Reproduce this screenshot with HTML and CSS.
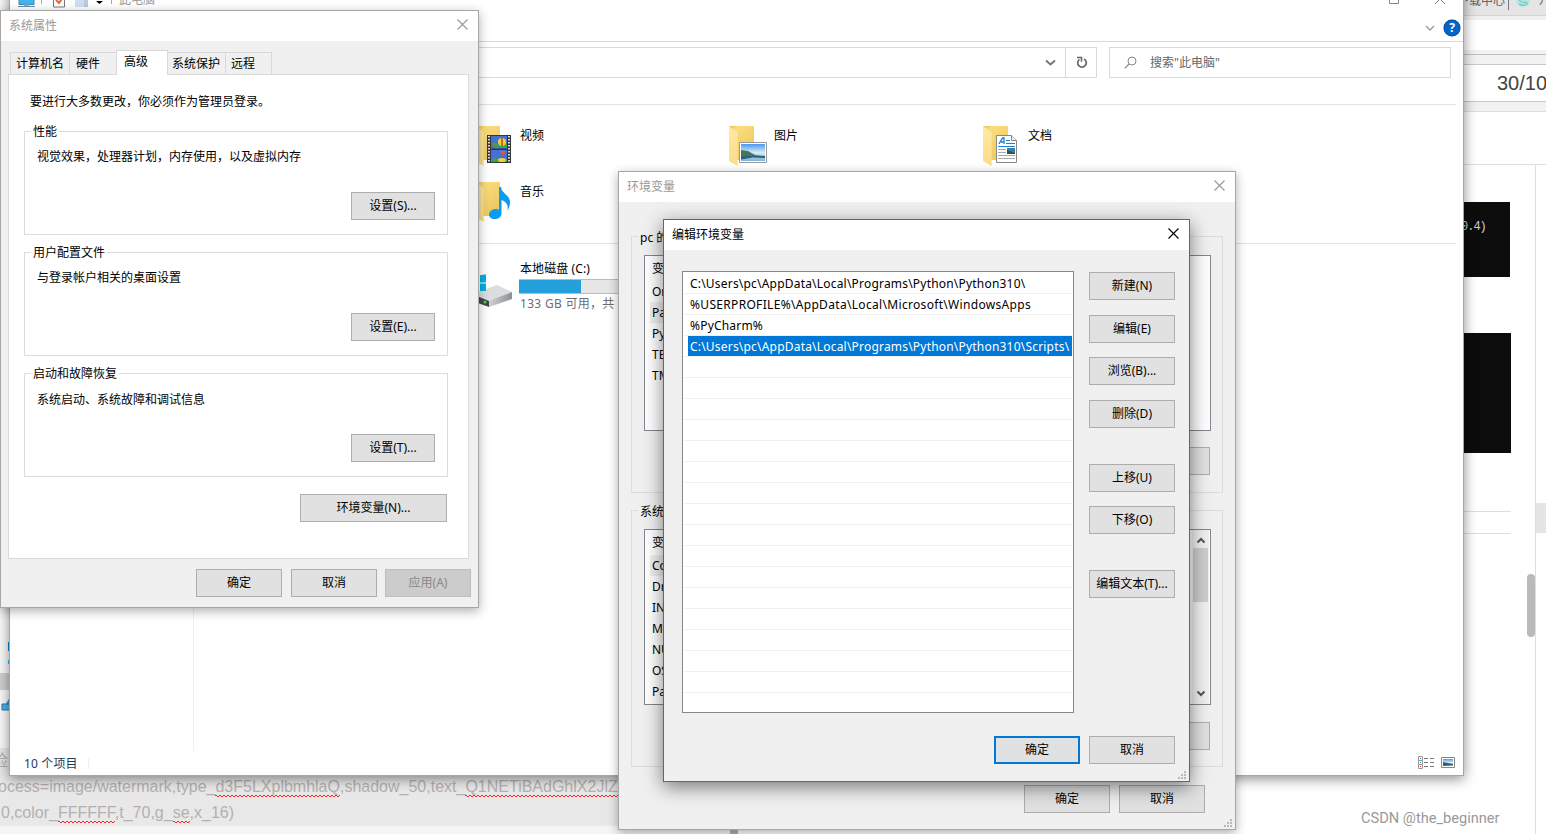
FILE: index.html
```
<!DOCTYPE html>
<html lang="zh-CN">
<head>
<meta charset="utf-8">
<title>编辑环境变量</title>
<link rel="stylesheet" href="styles.css">
</head>
<body>
<svg class="defs" width="0" height="0" aria-hidden="true">
  <defs>
    <linearGradient id="g-back" x1="0" y1="0" x2="0.6" y2="1"><stop offset="0" stop-color="#e9c155"/><stop offset="0.2" stop-color="#fbdc7c"/><stop offset="1" stop-color="#ecc763"/></linearGradient>
    <linearGradient id="g-flap" x1="0" y1="0" x2="0" y2="1"><stop offset="0" stop-color="#ffeaa5"/><stop offset="1" stop-color="#fbdc86"/></linearGradient>
    <linearGradient id="g-sky" x1="0" y1="0" x2="0" y2="1"><stop offset="0" stop-color="#4f97ee"/><stop offset="0.5" stop-color="#d3ecf8"/><stop offset="1" stop-color="#7cb4de"/></linearGradient>
    <linearGradient id="g-disk" x1="0" y1="0" x2="1" y2="0"><stop offset="0" stop-color="#cfd1d3"/><stop offset="1" stop-color="#8d9093"/></linearGradient>
    <g id="folder"><path d="M0 0H25V34H8L0 34Z" fill="url(#g-back)"/><path d="M0 0L8.6 6.5V40L0 35Z" fill="url(#g-flap)"/></g>
    <g id="close"><path d="M0.5 0.5L10.5 10.5M10.5 0.5L0.5 10.5" fill="none" stroke="currentColor" stroke-width="1.1"/></g>
    <g id="grip" fill="#b9b9b9"><path d="M6 0h2v2h-2zM3 3h2v2h-2zM6 3h2v2h-2zM0 6h2v2h-2zM3 6h2v2h-2zM6 6h2v2h-2z"/></g>
  </defs>
</svg>
<div class="desktop">
  <div class="backdrop">
    <div class="page-left">
      <div class="side-strip">
        <svg width="10" height="128" viewBox="0 0 10 128"><path d="M8 31h2v9h-2z" fill="#1583d0"/><path d="M8 49h2v4h-2z" fill="#29bdf0"/><path d="M9 54h1v3h-1z" fill="#555"/><path d="M0 62h10v17H0z" fill="#d0d0d0"/><path d="M9 73h1v3h-1z" fill="#444"/><path d="M2 93h4l2-4 2-2v12H2z" fill="#3d9dd8"/><path d="M2 93h8v6H2z" fill="#4fb4ec" stroke="#2c78ab"/></svg>
      </div>
      <div class="editor">
        <div class="editor-line cut">检</div>
        <div class="editor-line first">ocess=image/watermark,type_<u>d3F5LXplbmhlaQ</u>,shadow_50,text_<u>Q1NETiBAdGhlX2JlZ</u></div>
        <div class="editor-line second">0,color_<u>FFFFFF</u>,t_70,g_<u>se</u>,x_16)</div>
      </div>
      <div class="editor-foot"></div>
    </div>
    <div class="page-right">
      <div class="browser-tabs"><span>下载中心</span><i></i>
        <svg width="16" height="14" viewBox="0 0 16 14"><circle cx="7" cy="5" r="7" fill="#b9e6e1"/><path d="M2 1q1 8 9 6M4 0q2 5 6 3M3 9q5 3 9-1" fill="none" stroke="#7fcfc8" stroke-width="1.5"/></svg><span>八</span></div>
      <div class="browser-gap"></div>
      <div class="browser-bar"></div>
      <div class="browser-rule"></div>
      <div class="counter">30/10</div>
      <div class="toolbar-rule"></div>
      <div class="page-head"></div>
      <div class="page-body">
        <div class="preview">
          <div class="terminal one">0.4)</div>
          <div class="terminal two"></div>
          <div class="rules"></div>
          <div class="scroll-thumb"></div>
        </div>
        <div class="rail"><div class="rail-mark"></div></div>
      </div>
    </div>
  </div>

  <div class="watermark">CSDN @the_beginner</div>

  <section class="window explorer">
    <header class="ex-title">
      <svg width="100" height="30" viewBox="0 0 100 30">
        <path d="M9 8h15v10.500H9z" fill="#3fb5f1" stroke="#4a87a8"/><path d="M14 18.500h5v2h-5z" fill="#8fb4c6"/><path d="M8 20.500h17" stroke="#5d94b0"/>
        <path d="M31.500 8v10" stroke="#aaa"/>
        <path d="M43.500 8v13h11V8" fill="#fff" stroke="#777"/><path d="M46 14l3 3 4-6" fill="none" stroke="#e9622b" stroke-width="2"/>
        <path d="M65 8h10l3 6v7H65z" fill="#cfdcf0"/><path d="M74 14h4v7h-4z" fill="#b8c9e4"/>
        <path d="M86 15h7l-3.500 3z" fill="#000"/>
      </svg>
      <i class="ex-sep"></i><span>此电脑</span>
      <svg class="ex-controls" width="60" height="30" viewBox="0 0 60 30"><path d="M.5 8v9.500h9V8" fill="none" stroke="#888"/><path d="M46 18l10-10M46 8l10 10" fill="none" stroke="#888"/></svg>
    </header>
    <div class="ex-ribbon">
      <svg width="10" height="6" viewBox="0 0 10 6"><path d="M1 1l4 4 4-4" fill="none" stroke="#999" stroke-width="1.300"/></svg>
      <span class="help">?</span>
    </div>
    <div class="ex-nav">
      <div class="address">
        <svg width="11" height="8" viewBox="0 0 11 8"><path d="M1 1.500l4.500 4 4.500-4" fill="none" stroke="#777" stroke-width="2"/></svg>
        <div class="refresh"><svg width="12" height="13" viewBox="0 0 12 13"><path d="M8 3A4.300 4.300 0 1 1 3.400 3.400" fill="none" stroke="#666" stroke-width="1.700"/><path d="M1 1.500h4.500v4.300" fill="none" stroke="#666" stroke-width="1.500"/></svg></div>
      </div>
      <div class="search"><svg width="13" height="13" viewBox="0 0 13 13"><circle cx="8" cy="5" r="4" fill="none" stroke="#888"/><path d="M5 8L.8 12.300" stroke="#888" stroke-width="1.200"/></svg><span>搜索"此电脑"</span></div>
    </div>
    <div class="ex-main">
      <div class="tree"></div>
      <div class="content">
        <div class="tiles">
          <div class="tile"><svg width="40" height="42" viewBox="0 0 40 42"><use href="#folder"/><path d="M12 9h24v28H12z" fill="#33363b"/><path d="M16 10h16v12.500H16zM16 24h16v12H16z" fill="#4571d6"/><path d="M16 22v-3l4-3 4 4 8-2v4zM16 36v-2l5-2 3 2 8-1v3z" fill="#38a252"/><path d="M16 17l4 5h-4z" fill="#d33c65"/><ellipse cx="27" cy="16" rx="4" ry="4" fill="#f2d230"/><path d="M27 12v8" stroke="#b42" stroke-width="1.500"/><path d="M25 25h6l-3 5z" fill="#e1553b"/><ellipse cx="27" cy="34" rx="4" ry="2" fill="#f2d230"/><path d="M14 10v27M34 10v27" stroke="#ddd" stroke-width="2" stroke-dasharray="1.500 1.500"/></svg><span>视频</span></div>
          <div class="tile"><svg width="40" height="42" viewBox="0 0 40 42"><use href="#folder"/><path d="M10.500 16.500h27v20h-27z" fill="#fff" stroke="#999"/><path d="M12 18h24v17H12z" fill="url(#g-sky)"/><path d="M12 24l7 1 7 4 10 1v1H12z" fill="#47765f"/><path d="M12 30h24v2l-12-.5-12 2z" fill="#2f6272"/></svg><span>图片</span></div>
          <div class="tile"><svg width="40" height="42" viewBox="0 0 40 42"><use href="#folder"/><path d="M13.500 9.500h15l5 5v22h-20z" fill="#fff" stroke="#888"/><path d="M28.500 9.500v5h5" fill="#eee" stroke="#888"/><path d="M16 18l3.500-6h1.500v6M18 16h3" fill="none" stroke="#1883c8" stroke-width="1.300"/><path d="M23 14.500h4M23 17.500h9M15 20.500h17" stroke="#1883d8"/><path d="M15 23.500h8M15 26.500h8M15 29.500h17M15 32.500h17" stroke="#aaa"/><path d="M24 22h8v6h-8z" fill="#3f79a5"/><path d="M24 24l8 3v1h-8z" fill="#285942"/></svg><span>文档</span></div>
          <div class="tile"><svg width="40" height="42" viewBox="0 0 40 42"><use href="#folder"/><path d="M24 5h2c0 6 9 8 9 15 0 3-1 6-2.500 9 1-6-1-9-6-11v13c0 4-3 6-7 6-3.500 0-5.500-2-5.500-4.500 0-3 3-5.500 6.500-5.500 1.500 0 2.500.3 3.500.8z" fill="#0a9bf5"/></svg><span>音乐</span></div>
        </div>
        <div class="drive">
          <svg width="40" height="40" viewBox="0 0 40 40"><path d="M0 22l22-8 15 7-23 10z" fill="#dcdddf"/><path d="M37 21v7L14 36v-6z" fill="url(#g-disk)"/><path d="M0 24l14 6v6L0 31z" fill="#45484b"/><circle cx="10" cy="31" r="1.500" fill="#35e04a"/><path d="M0 5l4-.6v7.600H0zM5 4.200l6-.9v8.200H5zM0 13h4v7H0zM5 12.500h6v7.500H5z" fill="#00b2e3"/></svg>
          <div class="drive-info"><span>本地磁盘 (C:)</span><div class="bar"><b></b></div><em>133 GB 可用，共</em></div>
        </div>
      </div>
    </div>
    <footer class="ex-status"><span>10 个项目</span><i></i>
      <svg width="38" height="14" viewBox="0 0 38 14"><path d="M.5.5h4v4h-4zM.5 4.500h4v4h-4zM.5 8.500h4v4h-4z" fill="#fff" stroke="#999"/><path d="M2 2h1v1H2z" fill="#297a60"/><path d="M2 6h1v1H2z" fill="#2186d8"/><path d="M2 10h1v1H2z" fill="#e22c12"/><path d="M6 2.500h4M12 2.500h4M6 6.500h4M12 6.500h4M6 10.500h4M12 10.500h4" stroke="#777"/><path d="M23.500 1.500h13v10h-13z" fill="#fff" stroke="#888"/><path d="M25 3h10v7H25z" fill="url(#g-sky)"/><path d="M25 6l5 1 5 1v1l-10 1z" fill="#2f5f70"/></svg>
    </footer>
  </section>

  <section class="window sysprops">
    <header class="title"><span>系统属性</span><svg width="11" height="11" viewBox="0 0 11 11"><use href="#close"/></svg></header>
    <nav class="tabs"><span class="t1">计算机名</span><span class="t2">硬件</span><span class="t3 active">高级</span><span class="t4">系统保护</span><span class="t5">远程</span></nav>
    <div class="panel">
      <p class="intro">要进行大多数更改，你必须作为管理员登录。</p>
      <div class="group"><span class="legend">性能</span><p>视觉效果，处理器计划，内存使用，以及虚拟内存</p><button>设置(S)...</button></div>
      <div class="group"><span class="legend">用户配置文件</span><p>与登录帐户相关的桌面设置</p><button>设置(E)...</button></div>
      <div class="group startup"><span class="legend">启动和故障恢复</span><p>系统启动、系统故障和调试信息</p><button>设置(T)...</button></div>
      <button class="env-button">环境变量(N)...</button>
    </div>
    <footer class="actions"><button>确定</button><button>取消</button><button class="disabled">应用(A)</button></footer>
  </section>

  <section class="window envvars">
    <header class="title"><span>环境变量</span><svg width="11" height="11" viewBox="0 0 11 11"><use href="#close"/></svg></header>
    <div class="vars user">
      <span class="legend">pc 的</span>
      <div class="varlist"><ul><li class="head">变</li><li>On</li><li class="on">Pa</li><li>Py</li><li>TE</li><li>TM</li></ul></div>
      <button></button>
    </div>
    <div class="vars system">
      <span class="legend">系统</span>
      <div class="varlist"><ul><li class="head">变</li><li class="on">Co</li><li>Dr</li><li>IN</li><li>M</li><li>NU</li><li>OS</li><li>Pa</li></ul>
        <div class="scrollbar"><svg width="10" height="7" viewBox="0 0 10 7"><path d="M1.500 5.500L5 2l3.500 3.500" fill="none" stroke="#555" stroke-width="2"/></svg><b></b><svg width="10" height="7" viewBox="0 0 10 7"><path d="M1.500 1.500L5 5l3.500-3.500" fill="none" stroke="#555" stroke-width="2"/></svg></div></div>
      <button></button>
    </div>
    <footer class="actions"><button>确定</button><button>取消</button></footer>
    <svg class="grip" width="8" height="8" viewBox="0 0 8 8"><use href="#grip"/></svg>
  </section>

  <section class="window editvar">
    <header class="title"><span>编辑环境变量</span><svg width="11" height="11" viewBox="0 0 11 11"><use href="#close"/></svg></header>
    <div class="edit-body">
      <ul class="paths">
        <li><span class="p1">C:\Users\pc\AppData\Local\Programs\Python\Python310\</span></li>
        <li><span class="p2">%USERPROFILE%\AppData\Local\Microsoft\WindowsApps</span></li>
        <li><span class="p3">%PyCharm%</span></li>
        <li class="selected"><span class="p4">C:\Users\pc\AppData\Local\Programs\Python\Python310\Scripts\</span></li>
        <li></li><li></li><li></li><li></li><li></li><li></li><li></li><li></li><li></li><li></li><li></li><li></li><li></li><li></li><li></li><li></li>
      </ul>
      <div class="commands">
        <button>新建(N)</button><button class="gap15">编辑(E)</button><button class="gap14">浏览(B)...</button><button class="gap15">删除(D)</button>
        <button class="gap36">上移(U)</button><button class="gap14">下移(O)</button><button class="gap36">编辑文本(T)...</button>
      </div>
    </div>
    <footer class="actions"><button class="default">确定</button><button>取消</button></footer>
    <svg class="grip" width="8" height="8" viewBox="0 0 8 8"><use href="#grip"/></svg>
  </section>
</div>
</body>
</html>
```
FILE: styles.css
```
* { box-sizing: border-box; }
body { margin: 0; font: 12px/16px "Noto Sans", "Noto Sans CJK SC", sans-serif; color: #000; }
p, ul { margin: 0; padding: 0; list-style: none; }
svg { display: block; flex: none; }
.defs { position: absolute; }
.desktop { position: relative; width: 1546px; height: 834px; overflow: hidden; background: #fff; white-space: nowrap; }

/* pages behind the windows */
.backdrop { display: flex; justify-content: space-between; height: 834px; }
.page-left { width: 738px; display: flex; flex-direction: column; overflow: hidden; border-right: 8px solid #b0b0b0; }
.side-strip { height: 748px; padding-top: 611px; background: #fafafa; }
.editor { height: 78px; background: #e8e8e8; color: #b4b0b0; font: 16px/26px "Liberation Sans", "Noto Sans CJK SC", sans-serif; }
.editor-line { height: 26px; }
.editor-line u {
  text-decoration: none;
  padding-bottom: 2px;
  background-image:
    linear-gradient(45deg, transparent 35%, #f22 35%, #f22 65%, transparent 65%),
    linear-gradient(135deg, transparent 35%, #f22 35%, #f22 65%, transparent 65%);
  background-size: 4px 2px;
  background-position: 0 100%, 2px 100%;
  background-repeat: repeat-x;
}
.editor-line.cut { margin-left: -8px; }
.editor-line.first { margin-left: -2px; }
.editor-line.second { margin-left: 1px; }
.editor-foot { height: 8px; background: #f5f5f5; }
.page-right { width: 90px; display: flex; flex-direction: column; }
.browser-tabs { height: 16px; display: flex; align-items: flex-start; background: #e5e5e5; border-bottom: 1px solid #d5d5d5; overflow: hidden; color: #666; }
.browser-tabs span { flex: none; line-height: 16px; margin-top: -7px; margin-left: 1px; }
.browser-tabs i { flex: none; width: 1px; height: 10px; background: #777; margin: 0 7px 0 3px; }
.browser-tabs svg { margin-top: -5px; margin-right: 6px; }
.browser-gap { height: 4px; background: #f0f0f0; }
.browser-bar { height: 30px; background: #fff; }
.browser-rule { height: 15px; background: #f2f2f2; border: solid #c8c8c8; border-width: 0 0 1px; background-image: linear-gradient(#c0c0c0, #c0c0c0); background-size: 100% 1px; background-position: 0 4px; background-repeat: no-repeat; }
.counter { height: 36px; padding-left: 41px; overflow: hidden; font: 20px/36px "Liberation Sans", sans-serif; color: #444; }
.toolbar-rule { height: 11px; border: solid #c8c8c8; border-width: 1px 0; border-bottom-color: #dedede; background: #f2f2f2; }
.page-head { height: 53px; border-bottom: 1px solid #dedede; }
.page-body { flex: 1; display: flex; }
.preview { width: 79px; display: flex; flex-direction: column; }
.terminal { background: #0c0c0c; color: #ccc; font: 12px/16px "Liberation Mono", "Noto Sans CJK SC", monospace; }
.terminal.one { width: 54px; height: 75px; margin-top: 37px; padding: 17px 0 0 5px; letter-spacing: -1px; }
.terminal.two { width: 55px; height: 120px; margin-top: 56px; }
.rules { width: 55px; height: 23px; margin-top: 58px; border: solid #dedede; border-width: 1px 0; }
.scroll-thumb { width: 8px; height: 63px; margin-top: 40px; border-radius: 4px; background: #bababa; align-self: flex-end; }
.rail { width: 11px; border-left: 1px solid #dedede; padding-top: 338px; }
.rail-mark { height: 30px; background: #e4e5e7; }
.watermark { position: absolute; left: 1361px; top: 808px; font: 14.6px/20px Roboto, sans-serif; letter-spacing: 0; color: #999; }

/* shared window parts */
.window { position: absolute; display: flex; flex-direction: column; background: #f0f0f0; border: 1px solid #a6a6a6; box-shadow: 0 3px 10px rgba(0,0,0,.32); }
.title { height: 30px; flex: none; display: flex; justify-content: space-between; align-items: center; padding: 0 10px 0 8px; background: #fff; color: #999; }
.title svg { margin-bottom: 3px; }
button { display: flex; align-items: center; justify-content: center; width: 86px; height: 28px; padding: 0; flex: none; border: 1px solid #adadad; border-radius: 0; background: #e1e1e1; color: #000; font: inherit; }
button.disabled { background: #ccc; border-color: #bfbfbf; color: #888; }
button.default { border: 2px solid #0078d7; }
.actions { display: flex; justify-content: flex-end; }
.grip { position: absolute; right: 3px; bottom: 2px; }
.legend { align-self: flex-start; height: 16px; line-height: 16px; padding: 0 2px; }

/* file explorer */
.explorer { left: 9px; top: -15px; width: 1455px; height: 791px; background: #fff; box-shadow: 0 3px 12px rgba(0,0,0,.45); }
.ex-title { height: 30px; display: flex; color: #999; }
.ex-sep { width: 1px; height: 10px; margin: 8px 7px 0 1px; background: #aaa; }
.ex-title span { line-height: 28px; }
.ex-controls { margin-left: auto; margin-right: 14px; }
.ex-ribbon { height: 26px; border-bottom: 1px solid #dadada; display: flex; justify-content: flex-end; align-items: center; gap: 9px; padding: 0 3px 2px 0; }
.help { width: 16px; height: 16px; border-radius: 8px; background: #0066cc; box-shadow: 0 0 0 .5px #124; color: #fff; font-weight: 700; text-align: center; }
.ex-nav { height: 62px; display: flex; gap: 12px; padding: 5px 12px 0 0; }
.address { width: 1087px; height: 31px; display: flex; justify-content: flex-end; align-items: center; border: 1px solid #d9d9d9; }
.refresh { width: 31px; height: 29px; margin-left: 9px; padding-left: 1px; display: flex; align-items: center; justify-content: center; border-left: 1px solid #d9d9d9; }
.search { width: 342px; height: 31px; display: flex; align-items: center; gap: 13px; padding-left: 14px; border: 1px solid #d9d9d9; color: #666; }
.ex-main { height: 647px; display: flex; }
.tree { width: 184px; border-right: 1px solid #f0f0f0; }
.content { width: 1262px; border-top: 1px solid #e2e2e2; }
.tiles { height: 139px; display: grid; grid-template-columns: repeat(3, 254px); grid-auto-rows: 56px; padding: 21px 0 0 281px; border-bottom: 1px solid #e2e2e2; }
.tile { display: flex; gap: 5px; }
.tile span { margin-top: 2px; }
.drive { display: flex; gap: 4px; padding: 16px 0 0 281px; }
.drive svg { margin-top: 11px; }
.drive-info { width: 200px; display: flex; flex-direction: column; }
.drive-info span { padding: 1px 0 0 1px; height: 19px; letter-spacing: 0.1px; }
.bar { height: 15px; background: #e6e6e6; border: 1px solid #bcbcbc; border-left: 0; }
.bar b { display: block; width: 62px; height: 13px; background: #26a0da; }
.drive-info em { margin-top: 2px; padding-left: 1px; font-style: normal; color: #6d6d6d; letter-spacing: 0.3px; }
.ex-status { flex: 1; display: flex; align-items: center; padding-left: 14px; color: #1e395b; }
.ex-status span { padding-top: 2px; letter-spacing: 0.15px; }
.ex-status i { width: 1px; height: 11px; margin-left: 10px; background: #eee; }
.ex-status svg { margin-left: auto; margin-right: 7px; }

/* system properties */
.sysprops { left: 0; top: 10px; width: 479px; height: 598px; }
.tabs { display: flex; align-items: flex-end; height: 33px; padding-left: 9px; }
.tabs span { height: 22px; padding: 3px 0 0 5px; border: 1px solid #d9d9d9; border-bottom: 0; border-right: 0; }
.tabs .t1 { width: 59px; }
.tabs .t2 { width: 47px; padding-left: 6px; }
.tabs .t3 { width: 52px; height: 25px; padding: 3px 0 0 7px; background: #fff; border-right: 1px solid #d9d9d9; margin-bottom: -1px; position: relative; z-index: 1; }
.tabs .t4 { width: 57px; padding-left: 4px; border-left: 0; }
.tabs .t5 { width: 47px; border-right: 1px solid #d9d9d9; }
.panel { width: 461px; height: 485px; margin-left: 7px; padding: 19px 20px 0 15px; display: flex; flex-direction: column; background: #fff; border: 1px solid #d9d9d9; }
.intro { height: 37px; padding-left: 6px; }
.group { height: 104px; margin-bottom: 17px; display: flex; flex-direction: column; border: 1px solid #dcdcdc; }
.group .legend { margin: -8px 0 0 6px; background: #fff; }
.group p { padding: 9px 0 0 12px; height: 52px; }
.group.startup p { padding-top: 10px; }
.group button { width: 84px; align-self: flex-end; margin-right: 12px; }
.env-button { width: 147px; align-self: flex-end; margin-right: 1px; }
.sysprops .actions { gap: 9px; padding: 10px 7px 0 0; }
.sysprops .disabled { margin-left: -1px; }

/* environment variables */
.envvars { left: 618px; top: 171px; width: 618px; height: 659px; }
.vars { width: 592px; height: 257px; margin-left: 12px; display: flex; flex-direction: column; border: 1px solid #dcdcdc; }
.vars.user { margin-top: 34px; }
.vars.system { margin-top: 17px; }
.vars .legend { margin: -7px 0 0 6px; background: #f0f0f0; }
.varlist { width: 567px; height: 176px; margin: 9px 0 0 12px; display: flex; justify-content: space-between; border: 1px solid #828790; background: #fff; overflow: hidden; }
.varlist ul { width: 544px; padding-left: 5px; }
.varlist li { height: 21px; line-height: 21px; padding-left: 2px; }
.varlist li.head { height: 25px; line-height: 26px; }
.varlist li.on { background: #f0f0f0; }
.scrollbar { width: 17px; margin-right: 1px; padding: 7px 0; display: flex; flex-direction: column; align-items: center; background: #f0f0f0; }
.scrollbar b { width: 15px; height: 54px; margin-top: 4px; background: #cdcdcd; }
.scrollbar svg:last-child { margin-top: auto; }
.vars button { align-self: flex-end; margin: 16px 12px 0 0; }
.vars.system button { margin-top: 17px; }
.envvars .actions { gap: 9px; padding: 18px 30px 0 0; }

/* edit environment variable */
.editvar { left: 663px; top: 219px; width: 527px; height: 563px; border-color: #666; box-shadow: 0 5px 18px rgba(0,0,0,.5); }
.editvar .title { color: #000; }
.edit-body { display: flex; padding: 21px 14px 0 18px; gap: 15px; }
.paths { width: 392px; height: 442px; padding: 0 1px; border: 1px solid #828790; background: #fff; }
.paths li { height: 21px; padding-left: 4px; border-bottom: 1px solid #f0f0f0; }
.paths li:first-child { height: 22px; padding-top: 1px; }
.paths span { display: block; padding-left: 2px; height: 20px; line-height: 22px; letter-spacing: 0.2px; }
.paths .p2 { letter-spacing: 0.32px; }
.paths .selected span { background: #0078d7; color: #fff; }
.commands { padding-top: 1px; }
.commands .gap14 { margin-top: 14px; }
.commands .gap15 { margin-top: 15px; }
.commands .gap36 { margin-top: 36px; }
.editvar .actions { gap: 9px; padding: 23px 14px 0 0; }
```
